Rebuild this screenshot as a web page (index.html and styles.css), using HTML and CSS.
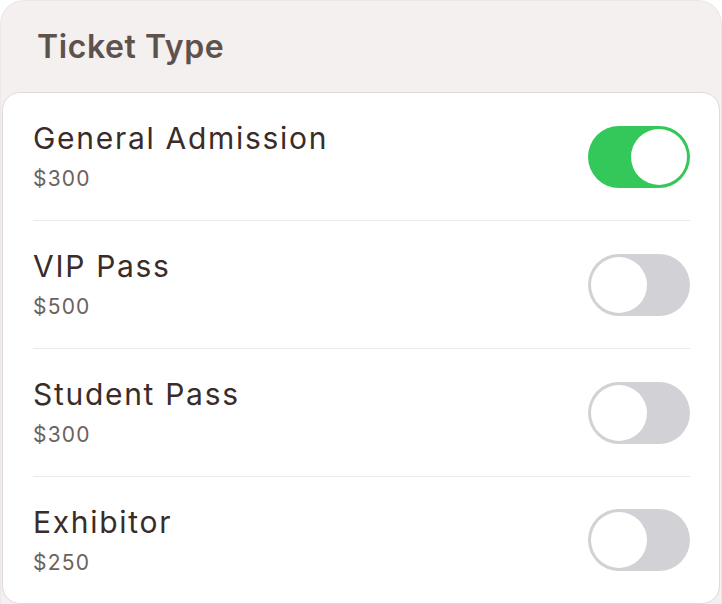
FILE: index.html
```html
<!DOCTYPE html>
<html>
<head>
<meta charset="utf-8">
<link rel="stylesheet" href="styles.css">
</head>
<body>
<div class="panel">
  <div class="header">Ticket Type</div>
  <div class="card">
    <div class="row">
      <div class="info"><div class="name">General Admission</div><div class="price">$300</div></div>
      <div class="toggle on"><span class="knob"></span></div>
    </div>
    <div class="row">
      <div class="info"><div class="name">VIP Pass</div><div class="price">$500</div></div>
      <div class="toggle"><span class="knob"></span></div>
    </div>
    <div class="row">
      <div class="info"><div class="name">Student Pass</div><div class="price">$300</div></div>
      <div class="toggle"><span class="knob"></span></div>
    </div>
    <div class="row">
      <div class="info"><div class="name">Exhibitor</div><div class="price">$250</div></div>
      <div class="toggle"><span class="knob"></span></div>
    </div>
  </div>
</div>
</body>
</html>
```
FILE: styles.css
```css
html, body { margin: 0; padding: 0; background: #ffffff; }
body { font-family: Inter, "Noto Sans", sans-serif; }
.panel {
  width: 722px;
  height: 604px;
  box-sizing: border-box;
  background: #f4f0ef;
  border-radius: 24px 24px 0 0;
  border: 1px solid #ece8e7;
  border-bottom: none;
  overflow: hidden;
}
.header {
  height: 91px;
  box-sizing: border-box;
  padding: 26px 0 0 36px;
  font-size: 32px;
  font-weight: 600;
  color: #5e524d;
  line-height: 40px;
  letter-spacing: 0.6px;
}
.card {
  margin: 0 1px;
  background: #ffffff;
  border: 1px solid #dedad9;
  border-radius: 18px;
  padding: 0 29px 0 30px;
}
.row {
  height: 127px;
  display: flex;
  align-items: center;
  justify-content: space-between;
  border-bottom: 1px solid #ebe8e7;
}
.row:last-child { border-bottom: none; height: 126px; }
.info { display: flex; flex-direction: column; }
.name {
  font-size: 30px;
  line-height: 36px;
  color: #3a2c29;
  letter-spacing: 1.7px;
}
.price {
  font-size: 21px;
  line-height: 28px;
  margin-top: 9px;
  color: #6d615d;
  letter-spacing: 1.2px;
}
.toggle {
  width: 102px;
  height: 62px;
  border-radius: 31px;
  background: #d2d1d6;
  box-sizing: border-box;
  padding: 3px;
  display: flex;
  justify-content: flex-start;
}
.toggle.on { background: #34c759; justify-content: flex-end; }
.knob {
  width: 56px;
  height: 56px;
  border-radius: 50%;
  background: #ffffff;
}
```
